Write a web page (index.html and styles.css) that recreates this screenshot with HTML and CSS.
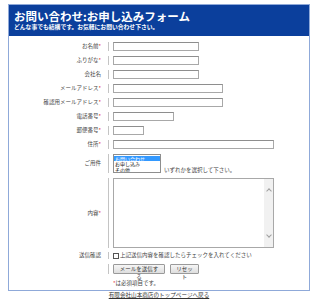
FILE: index.html
```html
<!DOCTYPE html>
<html lang="ja">
<head>
<meta charset="utf-8">
<title>お問い合わせ</title>
<link rel="stylesheet" href="styles.css">
</head>
<body>
<div class="form-box">
  <div class="head">
    <h1>お問い合わせ:お申し込みフォーム</h1>
    <p>どんな事でも結構です。お気軽にお問い合わせ下さい。</p>
  </div>
  <div class="rows">
    <div class="row"><div class="lbl">お名前<span class="req">*</span></div><div class="val"><input class="inp w-name" type="text"></div></div>
    <div class="row"><div class="lbl">ふりがな<span class="req">*</span></div><div class="val"><input class="inp w-name" type="text"></div></div>
    <div class="row"><div class="lbl">会社名</div><div class="val"><input class="inp w-name" type="text"></div></div>
    <div class="row"><div class="lbl">メールアドレス<span class="req">*</span></div><div class="val"><input class="inp w-mail" type="text"></div></div>
    <div class="row"><div class="lbl">確認用メールアドレス<span class="req">*</span></div><div class="val"><input class="inp w-mail" type="text"></div></div>
    <div class="row"><div class="lbl">電話番号<span class="req">*</span></div><div class="val"><input class="inp w-tel" type="text"></div></div>
    <div class="row"><div class="lbl">郵便番号<span class="req">*</span></div><div class="val"><input class="inp w-zip" type="text"></div></div>
    <div class="row"><div class="lbl">住所<span class="req">*</span></div><div class="val"><input class="inp w-addr" type="text"></div></div>
    <div class="row"><div class="lbl">ご用件</div><div class="val val-select">
      <div class="listbox">
        <div class="opt sel">お問い合わせ</div>
        <div class="opt">お申し込み</div>
        <div class="opt">その他</div>
      </div>
      <span class="hint">いずれかを選択して下さい。</span>
    </div></div>
    <div class="row"><div class="lbl">内容<span class="req">*</span></div><div class="val">
      <div class="textarea"><div class="sbar"><span class="chev up"></span><span class="chev down"></span></div></div>
    </div></div>
    <div class="row row-check"><div class="lbl">送信確認</div><div class="val"><span class="cbox"></span><span class="ctext">上記送信内容を確認したらチェックを入れてください</span></div></div>
    <div class="row row-btn"><div class="lbl"></div><div class="val">
      <button class="btn" type="button">メールを送信する</button>
      <button class="btn" type="button">リセット</button>
    </div></div>
    <div class="row row-note"><div class="lbl"></div><div class="val no-sep"><span class="req">*</span>は必須項目です。</div></div>
  </div>
</div>
<p class="back"><a href="#">有限会社山本商店のトップページへ戻る</a></p>
</body>
</html>
```

FILE: styles.css
```css
html, body {
  margin: 0;
  padding: 0;
  background: #ffffff;
}
body {
  padding: 4px 0 0 8px;
  font-family: "Noto Sans CJK JP", "Noto Sans", sans-serif;
  color: #444444;
  font-size: 5.5px;
}
.form-box {
  width: 300px;
  border: 1px solid #8fa9d9;
}
.head {
  background: #0b3f9c;
  color: #ffffff;
  padding: 5px 5px 6px 5px;
  height: 20px;
}
.head h1 {
  margin: 0;
  font-size: 11.5px;
  line-height: 13px;
  font-weight: bold;
}
.head p {
  margin: 0;
  font-size: 5.8px;
  line-height: 7px;
  font-weight: bold;
}
.rows {
  display: flex;
  flex-direction: column;
  gap: 5px;
  padding: 6px 0 3px 0;
}
.row {
  display: flex;
  align-items: stretch;
}
.lbl {
  width: 92px;
  text-align: right;
  display: flex;
  align-items: center;
  justify-content: flex-end;
  line-height: 7px;
  white-space: nowrap;
}
.req {
  color: #e00000;
}
.val {
  margin-left: 7px;
  border-left: 1px solid #c4c4c4;
  padding-left: 4px;
  display: flex;
  align-items: center;
  min-height: 9px;
}
.val.no-sep {
  border-left-color: transparent;
}
.inp {
  box-sizing: border-box;
  height: 9px;
  margin: 0;
  padding: 0;
  border: 1px solid #a8a8a8;
  border-top-color: #8e8e8e;
  background: #ffffff;
  font-size: 5.5px;
}
.w-name { width: 86px; }
.w-mail { width: 110px; }
.w-tel { width: 61px; }
.w-zip { width: 31px; }
.w-addr { width: 161px; }
.val-select {
  align-items: flex-end;
}
.listbox {
  box-sizing: border-box;
  width: 48px;
  height: 19px;
  border: 1px solid #8e8e8e;
  background: #ffffff;
  color: #222222;
  font-size: 5px;
  line-height: 5.6px;
  padding-top: 0.5px;
  overflow: hidden;
}
.opt {
  padding-left: 1px;
  white-space: nowrap;
  height: 5.6px;
}
.opt.sel {
  background: #3399ff;
  color: #ffffff;
}
.hint {
  margin-left: 3px;
  line-height: 7px;
  margin-bottom: -1px;
}
.textarea {
  box-sizing: border-box;
  width: 161px;
  height: 70px;
  border: 1px solid #a8a8a8;
  background: #ffffff;
  display: flex;
  justify-content: flex-end;
}
.sbar {
  width: 9px;
  background: #f1f1f1;
  position: relative;
}
.chev {
  position: absolute;
  left: 2.5px;
  width: 3px;
  height: 3px;
  border-left: 1px solid #a0a0a0;
  border-top: 1px solid #a0a0a0;
}
.chev.up {
  top: 10px;
  transform: rotate(45deg);
}
.chev.down {
  bottom: 10px;
  transform: rotate(225deg);
}
.row-check {
  margin-top: -1px;
}
.row-check .val {
  min-height: 7px;
}
.cbox {
  box-sizing: border-box;
  width: 6px;
  height: 6px;
  border: 1px solid #555555;
  background: #ffffff;
  margin-right: 1px;
}
.ctext {
  line-height: 7px;
}
.btn {
  box-sizing: border-box;
  height: 10px;
  margin: 0 5px 0 0;
  padding: 0 4px;
  border: 1px solid #9a9a9a;
  border-radius: 1px;
  background: linear-gradient(#f6f6f6, #dedede);
  color: #333333;
  font-family: "Noto Sans CJK JP", "Noto Sans", sans-serif;
  font-size: 5.5px;
  line-height: 8px;
}
.btn:first-child {
  width: 52px;
}
.btn + .btn {
  width: 29px;
}
.row-note {
  margin-top: 1px;
}
.row-note .val {
  min-height: 7px;
  line-height: 7px;
}
.back {
  margin: 0;
  width: 302px;
  text-align: center;
  line-height: 8px;
  font-size: 5.6px;
}
.back a {
  color: #333333;
  text-decoration: underline;
}
```
